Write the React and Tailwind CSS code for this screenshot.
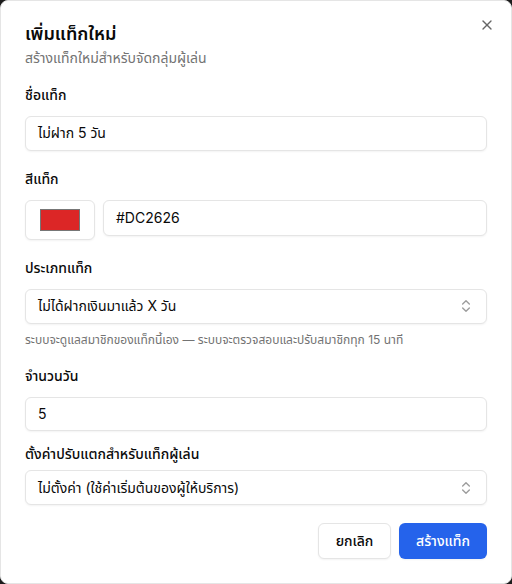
import React from "react";
import { X, ChevronsUpDown } from "lucide-react";

const fontStack = { fontFamily: 'Inter, "Noto Sans", "Noto Sans Thai", sans-serif' };

const Label = ({ children, className = "" }) => (
  <div className={`h-5 flex items-center text-sm font-medium text-[#0a0a0a] ${className}`}>
    {children}
  </div>
);

const FieldBox = ({ children, className = "" }) => (
  <div
    className={`h-9 flex items-center justify-between rounded-md border border-[#e5e5e5] bg-white px-3 text-sm text-[#0a0a0a] shadow-xs ${className}`}
  >
    {children}
  </div>
);

const App = () => {
  return (
    <div className="w-[512px] h-[584px] bg-[#1c1c1c]" style={fontStack}>
      <div className="relative w-full h-full rounded-lg border border-[#e5e5e5] bg-white p-6 flex flex-col">
        {/* close button */}
        <button className="absolute top-4 right-4 text-[#404040] opacity-80">
          <X className="w-4 h-4" />
        </button>

        {/* header */}
        <h2 className="text-lg font-semibold leading-none text-[#0a0a0a]">
          เพิ่มแท็กใหม่
        </h2>
        <p className="mt-[5px] text-sm leading-5 text-[#737373]">
          สร้างแท็กใหม่สำหรับจัดกลุ่มผู้เล่น
        </p>

        {/* tag name */}
        <Label className="mt-[17px]">ชื่อแท็ก</Label>
        <FieldBox className="mt-[11px]">ไม่ฝาก 5 วัน</FieldBox>

        {/* tag colour */}
        <Label className="mt-[18px]">สีแท็ก</Label>
        <div className="mt-[11px] flex items-start gap-2">
          <div className="w-[70px] h-10 shrink-0 rounded-md border border-[#e5e5e5] bg-white flex items-center justify-center shadow-xs">
            <div className="w-10 h-[22px] bg-[#DC2626] border border-[#767676]" />
          </div>
          <FieldBox className="flex-1">#DC2626</FieldBox>
        </div>

        {/* tag type */}
        <Label className="mt-[18px]">ประเภทแท็ก</Label>
        <FieldBox className="mt-[11px]">
          <span>ไม่ได้ฝากเงินมาแล้ว X วัน</span>
          <ChevronsUpDown className="w-4 h-4 opacity-40" />
        </FieldBox>
        <p className="mt-2 h-4 flex items-center text-xs text-[#737373]">
          ระบบจะดูแลสมาชิกของแท็กนี้เอง — ระบบจะตรวจสอบและปรับสมาชิกทุก 15 นาที
        </p>

        {/* days */}
        <Label className="mt-[18px]">จำนวนวัน</Label>
        <FieldBox className="mt-[11px]">5</FieldBox>

        {/* rebate */}
        <Label className="mt-[13px]">ตั้งค่าปรับแตกสำหรับแท็กผู้เล่น</Label>
        <FieldBox className="mt-[6px]">
          <span>ไม่ตั้งค่า (ใช้ค่าเริ่มต้นของผู้ให้บริการ)</span>
          <ChevronsUpDown className="w-4 h-4 opacity-40" />
        </FieldBox>

        {/* footer */}
        <div className="mt-[18px] flex justify-end gap-2">
          <button className="h-9 w-[73px] rounded-md border border-[#e5e5e5] bg-white text-sm font-medium text-[#0a0a0a] shadow-xs">
            ยกเลิก
          </button>
          <button className="h-9 w-[88px] rounded-md bg-[#2563eb] text-sm font-medium text-white shadow-xs">
            สร้างแท็ก
          </button>
        </div>
      </div>
    </div>
  );
};

export default App;
